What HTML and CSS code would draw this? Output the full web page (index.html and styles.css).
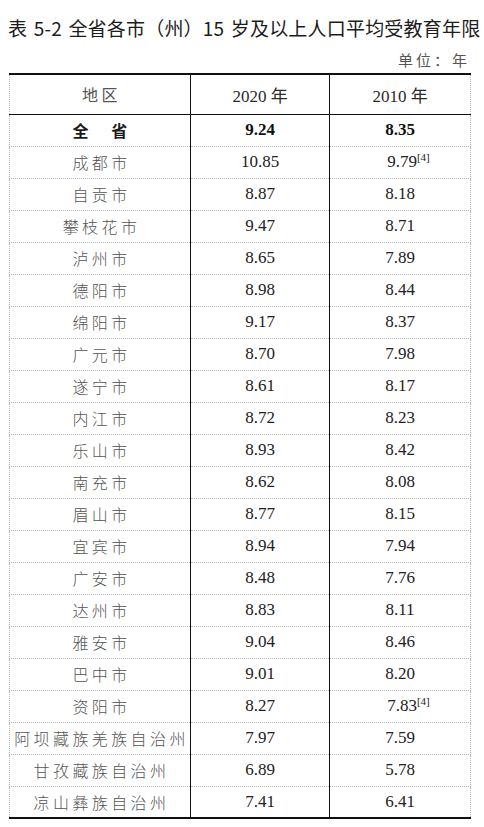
FILE: index.html
```html
<!DOCTYPE html>
<html lang="zh-CN">
<head>
<meta charset="utf-8">
<title>表 5-2</title>
<link rel="stylesheet" href="styles.css">
</head>
<body>
<div class="page">
  <h1 class="title">表 5-2 全省各市（州）15 岁及以上人口平均受教育年限</h1>
  <div class="unit">单位：年</div>
  <table class="data">
    <colgroup>
      <col class="c1"><col class="c2"><col class="c3">
    </colgroup>
    <thead>
      <tr><th class="region">地区</th><th class="num">2020 年</th><th class="num">2010 年</th></tr>
    </thead>
    <tbody>
      <tr class="total"><td class="region">全　省</td><td class="num">9.24</td><td class="num">8.35</td></tr>
      <tr><td class="region">成都市</td><td class="num">10.85</td><td class="num">9.79<sup class="note">[4]</sup></td></tr>
      <tr><td class="region">自贡市</td><td class="num">8.87</td><td class="num">8.18</td></tr>
      <tr><td class="region">攀枝花市</td><td class="num">9.47</td><td class="num">8.71</td></tr>
      <tr><td class="region">泸州市</td><td class="num">8.65</td><td class="num">7.89</td></tr>
      <tr><td class="region">德阳市</td><td class="num">8.98</td><td class="num">8.44</td></tr>
      <tr><td class="region">绵阳市</td><td class="num">9.17</td><td class="num">8.37</td></tr>
      <tr><td class="region">广元市</td><td class="num">8.70</td><td class="num">7.98</td></tr>
      <tr><td class="region">遂宁市</td><td class="num">8.61</td><td class="num">8.17</td></tr>
      <tr><td class="region">内江市</td><td class="num">8.72</td><td class="num">8.23</td></tr>
      <tr><td class="region">乐山市</td><td class="num">8.93</td><td class="num">8.42</td></tr>
      <tr><td class="region">南充市</td><td class="num">8.62</td><td class="num">8.08</td></tr>
      <tr><td class="region">眉山市</td><td class="num">8.77</td><td class="num">8.15</td></tr>
      <tr><td class="region">宜宾市</td><td class="num">8.94</td><td class="num">7.94</td></tr>
      <tr><td class="region">广安市</td><td class="num">8.48</td><td class="num">7.76</td></tr>
      <tr><td class="region">达州市</td><td class="num">8.83</td><td class="num">8.11</td></tr>
      <tr><td class="region">雅安市</td><td class="num">9.04</td><td class="num">8.46</td></tr>
      <tr><td class="region">巴中市</td><td class="num">9.01</td><td class="num">8.20</td></tr>
      <tr><td class="region">资阳市</td><td class="num">8.27</td><td class="num">7.83<sup class="note">[4]</sup></td></tr>
      <tr><td class="region">阿坝藏族羌族自治州</td><td class="num">7.97</td><td class="num">7.59</td></tr>
      <tr><td class="region">甘孜藏族自治州</td><td class="num">6.89</td><td class="num">5.78</td></tr>
      <tr><td class="region">凉山彝族自治州</td><td class="num">7.41</td><td class="num">6.41</td></tr>
    </tbody>
  </table>
</div>
</body>
</html>
```
FILE: styles.css
```css
html, body {
  margin: 0;
  padding: 0;
  background: #ffffff;
}

.page {
  padding: 14px 14px 0 8px;
  display: flex;
  flex-direction: column;
}

.title {
  margin: 0;
  font-family: "Noto Sans CJK SC", sans-serif;
  font-weight: 400;
  font-size: 19px;
  line-height: 28px;
  letter-spacing: 0.2px;
  word-spacing: 2px;
  color: #1c1c1c;
  white-space: nowrap;
}

.unit {
  margin-top: 8px;
  align-self: flex-end;
  font-family: "Noto Sans CJK SC", sans-serif;
  font-size: 15px;
  line-height: 20px;
  letter-spacing: 3px;
  color: #555;
}

.data {
  margin-top: 3px;
  margin-left: 1px;
  width: 461px;
  border-collapse: collapse;
  table-layout: fixed;
}

.c1 { width: 181px; }
.c2 { width: 139px; }
.c3 { width: 141px; }

.data th,
.data td {
  padding: 0;
  text-align: center;
  vertical-align: middle;
  border-top: 1px dotted #b8b8b8;
  border-bottom: 1px dotted #b8b8b8;
  border-left: 1px solid #111;
  border-right: 1px solid #111;
}

.data th:first-child,
.data td:first-child {
  border-left: 1px dotted #b8b8b8;
}

.data th:last-child,
.data td:last-child {
  border-right: 1px dotted #b8b8b8;
}

.data thead tr {
  height: 40px;
}

.data thead th {
  border-top: 2px solid #111;
  border-bottom: 1px solid #111;
  font-weight: 400;
}

.data tbody tr {
  height: 32px;
}

.data tbody tr:last-child td {
  border-bottom: 2px solid #111;
}

.region {
  font-family: "Noto Sans CJK SC", sans-serif;
  font-weight: 300;
  font-size: 16px;
  letter-spacing: 3.4px;
  text-indent: 3px;
  color: #555;
  white-space: nowrap;
}

.num {
  font-family: "Liberation Serif", "Noto Sans CJK SC", serif;
  font-size: 17px;
  color: #222;
}

thead .num {
  color: #2a2a2a;
}

.total .region {
  font-weight: 700;
  color: #1a1a1a;
}

.total .num {
  font-weight: 700;
  color: #111;
}

.note {
  font-size: 11px;
  vertical-align: 6px;
  line-height: 0;
  margin-right: -17px;
}
```
